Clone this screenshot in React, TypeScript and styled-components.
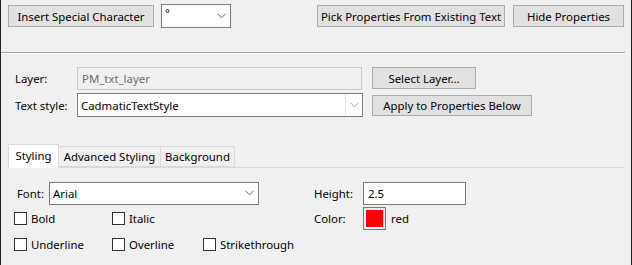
import React from "react";
import styled, { createGlobalStyle } from "styled-components";

const Global = createGlobalStyle`
  html, body { margin: 0; padding: 0; background: #f0f0f0; }
  * { box-sizing: border-box; }
`;

const Frame = styled.div`
  width: 632px;
  height: 265px;
  background: #f0f0f0;
  border-left: 1px solid #1e1e1e;
  border-right: 1px solid #1e1e1e;
  font-family: "Noto Sans", "Open Sans", sans-serif;
  font-size: 11.4px;
  color: #000;
  overflow: hidden;
`;

const TopBar = styled.div`
  display: flex;
  align-items: center;
  height: 24px;
  margin-top: 4px;
  padding: 0 7px 0 7px;
`;

const Spacer = styled.div`
  flex: 1;
`;

const Button = styled.button<{ $w: number; $h?: number; $ml?: number }>`
  width: ${(p) => p.$w}px;
  height: ${(p) => p.$h ?? 22}px;
  margin-left: ${(p) => p.$ml ?? 0}px;
  background: #e1e1e1;
  border: 1px solid #adadad;
  font: inherit;
  color: #000;
  padding: 0;
  display: flex;
  align-items: center;
  justify-content: center;
  white-space: nowrap;
  flex: none;
`;

const Combo = styled.div<{ $w: number; $h?: number; $ml?: number }>`
  width: ${(p) => p.$w}px;
  height: ${(p) => p.$h ?? 24}px;
  margin-left: ${(p) => p.$ml ?? 0}px;
  background: #fff;
  border: 1px solid #7a7a7a;
  display: flex;
  align-items: center;
  padding-left: 3px;
  flex: none;
`;

const ComboText = styled.span<{ $top?: boolean }>`
  flex: 1;
  white-space: nowrap;
  ${(p) => (p.$top ? "align-self: flex-start; line-height: 12px; margin-top: 2px;" : "")}
`;

const ArrowBox = styled.div<{ $sep?: boolean }>`
  width: 17px;
  height: 100%;
  display: flex;
  align-items: center;
  justify-content: center;
  border-left: ${(p) => (p.$sep ? "1px solid #e3e3e3" : "none")};
  flex: none;
`;

const Chevron = ({ color = "#606060" }: { color?: string }) => (
  <svg width="9" height="6" viewBox="0 0 9 6">
    <path d="M0.5 0.8 L4.5 4.8 L8.5 0.8" fill="none" stroke={color} strokeWidth="1" />
  </svg>
);

const Separator = styled.div`
  margin-top: 24px;
  width: 624px;
  height: 2px;
  border-top: 1px solid #a0a0a0;
  border-bottom: 1px solid #ffffff;
`;

const Form = styled.div`
  display: flex;
  flex-direction: column;
  gap: 3px;
  margin-top: 12px;
  padding-left: 14px;
`;

const FormRow = styled.div`
  display: flex;
  align-items: center;
  height: 24px;
`;

const Label = styled.span<{ $w: number }>`
  width: ${(p) => p.$w}px;
  flex: none;
  white-space: nowrap;
`;

const Field = styled.div<{ $w: number; $disabled?: boolean }>`
  width: ${(p) => p.$w}px;
  height: 23px;
  background: ${(p) => (p.$disabled ? "#f0f0f0" : "#fff")};
  border: 1px solid ${(p) => (p.$disabled ? "#cccccc" : "#7a7a7a")};
  color: ${(p) => (p.$disabled ? "#6d6d6d" : "#000")};
  display: flex;
  align-items: center;
  padding-left: 4px;
  flex: none;
  white-space: nowrap;
`;

const TabStrip = styled.div`
  margin-top: 28px;
  margin-left: 7px;
  width: 616px;
  height: 23px;
  display: flex;
  align-items: flex-end;
  border-bottom: 1px solid #d9d9d9;
`;

const Tab = styled.div<{ $active?: boolean; $w: number }>`
  width: ${(p) => p.$w}px;
  height: ${(p) => (p.$active ? 24 : 21)}px;
  margin-bottom: ${(p) => (p.$active ? -1 : 0)}px;
  background: ${(p) => (p.$active ? "#ffffff" : "#f0f0f0")};
  border: 1px solid #d9d9d9;
  border-bottom: ${(p) => (p.$active ? "none" : "1px solid #d9d9d9")};
  margin-right: -1px;
  display: flex;
  align-items: center;
  justify-content: center;
  padding-bottom: ${(p) => (p.$active ? 3 : 0)}px;
  white-space: nowrap;
  position: relative;
  z-index: ${(p) => (p.$active ? 1 : 0)};
`;

const Panel = styled.div`
  margin-top: 13px;
  padding-left: 13px;
  display: grid;
  grid-template-columns: 300px 1fr;
  grid-template-rows: 24px 26px 26px;
  align-items: center;
`;

const Cell = styled.div`
  display: flex;
  align-items: center;
`;

const CheckItem = styled.label<{ $w: number }>`
  width: ${(p) => p.$w}px;
  display: flex;
  align-items: center;
  gap: 4px;
  flex: none;
  white-space: nowrap;
`;

const Box = styled.span`
  width: 13px;
  height: 13px;
  border: 1px solid #333;
  background: #fff;
  flex: none;
`;

const Swatch = styled.div`
  width: 23px;
  height: 23px;
  border: 1px solid #7a7a7a;
  padding: 2px;
  background: #f0f0f0;
  flex: none;
  margin-right: 5px;
`;

const SwatchFill = styled.div<{ $c: string }>`
  width: 100%;
  height: 100%;
  background: ${(p) => p.$c};
`;

export default function App() {
  return (
    <>
      <Global />
      <Frame>
        <TopBar>
          <Button $w={146}>Insert Special Character</Button>
          <Combo $w={70} $ml={7}>
            <ComboText $top>°</ComboText>
            <ArrowBox>
              <Chevron />
            </ArrowBox>
          </Combo>
          <Spacer />
          <Button $w={188}>Pick Properties From Existing Text</Button>
          <Button $w={111} $ml={8}>Hide Properties</Button>
        </TopBar>
        <Separator />
        <Form>
          <FormRow>
            <Label $w={62}>Layer:</Label>
            <Field $w={285} $disabled>PM_txt_layer</Field>
            <Button $w={104} $ml={10}>Select Layer...</Button>
          </FormRow>
          <FormRow>
            <Label $w={62}>Text style:</Label>
            <Combo $w={286}>
              <ComboText>CadmaticTextStyle</ComboText>
              <ArrowBox $sep>
                <Chevron color="#a8a8a8" />
              </ArrowBox>
            </Combo>
            <Button $w={160} $ml={9} $h={21}>Apply to Properties Below</Button>
          </FormRow>
        </Form>
        <TabStrip>
          <Tab $active $w={51}>Styling</Tab>
          <Tab $w={103}>Advanced Styling</Tab>
          <Tab $w={75}>Background</Tab>
        </TabStrip>
        <Panel>
          <Cell>
            <Label $w={35}>&nbsp;Font:</Label>
            <Combo $w={210} $h={23}>
              <ComboText>Arial</ComboText>
              <ArrowBox>
                <Chevron />
              </ArrowBox>
            </Combo>
          </Cell>
          <Cell>
            <Label $w={49}>Height:</Label>
            <Field $w={103}>2.5</Field>
          </Cell>
          <Cell>
            <CheckItem $w={98}>
              <Box />
              Bold
            </CheckItem>
            <CheckItem $w={91}>
              <Box />
              Italic
            </CheckItem>
          </Cell>
          <Cell>
            <Label $w={49}>Color:</Label>
            <Swatch>
              <SwatchFill $c="#ff0000" />
            </Swatch>
            red
          </Cell>
          <Cell>
            <CheckItem $w={98}>
              <Box />
              Underline
            </CheckItem>
            <CheckItem $w={91}>
              <Box />
              Overline
            </CheckItem>
            <CheckItem $w={110}>
              <Box />
              Strikethrough
            </CheckItem>
          </Cell>
          <Cell />
        </Panel>
      </Frame>
    </>
  );
}
